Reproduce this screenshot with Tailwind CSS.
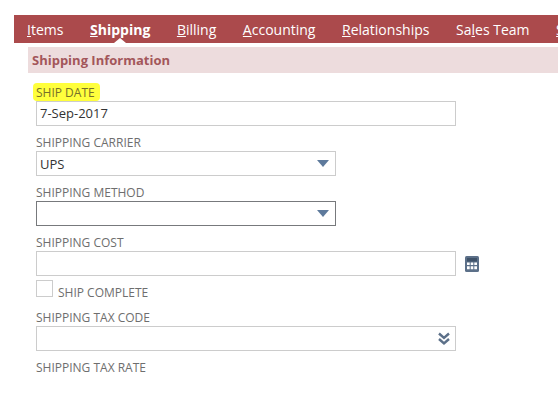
<!DOCTYPE html>
<html lang="en">
  <head>
    <meta charset="UTF-8" />
    <meta name="viewport" content="width=device-width, initial-scale=1.0" />
    <title>Shipping</title>
    <script src="https://cdn.jsdelivr.net/npm/@tailwindcss/browser@4"></script>
  </head>

  <body class="bg-white overflow-hidden h-[407px] font-['Open_Sans',sans-serif]">
    <div class="pt-[15px] pl-[14px]">
      <!-- Tabs -->
      <nav class="h-[28px] bg-[#ab4a4c] text-white text-[14px] leading-[30px] flex gap-[26.6px] pl-[13px] whitespace-nowrap overflow-hidden">
        <a><u>I</u>tems</a>
        <a class="relative font-bold"><u>S</u>hipping
          <span class="absolute left-[24px] bottom-0 w-0 h-0 border-x-[6px] border-x-transparent border-b-[5px] border-b-white"></span>
        </a>
        <a><u>B</u>illing</a>
        <a><u>A</u>ccounting</a>
        <a><u>R</u>elationships</a>
        <a>Sa<u>l</u>es Team</a>
        <a><u>S</u>ystem</a>
      </nav>

      <div class="pl-[14px] pt-[4px]">
        <!-- Section header -->
        <div class="h-[26px] bg-[#eddcdd] text-[#a3565a] text-[13px] font-bold leading-[26px] pl-[4px]">Shipping Information</div>

        <!-- Fields -->
        <div class="pl-[8px] pt-[3px] text-[12px] text-[#6e6e6e]">
          <div class="h-[25px] flex items-end">
            <span class="bg-[#ffff3c] text-[#77702a] -ml-[3px] px-[3px] pr-[5px] pt-[2px] leading-[16px] rounded-sm">SHIP DATE</span>
          </div>
          <div class="w-[420px] h-[25px] border border-[#cccccc] text-[13px] text-[#333333] leading-[23px] pl-[3px]">7-Sep-2017</div>

          <div class="h-[25px] flex items-end leading-[16px]">SHIPPING CARRIER</div>
          <div class="w-[300px] h-[25px] border border-[#cccccc] text-[13px] text-[#333333] leading-[23px] pl-[3px] flex justify-between items-center pr-[6px]">
            <span class="mt-[1px]">UPS</span>
            <svg class="w-[12px] h-[7px]" viewBox="0 0 12 7"><path d="M0 0h12L6 7z" fill="#5e7a9c" /></svg>
          </div>

          <div class="h-[25px] flex items-end leading-[16px]">SHIPPING METHOD</div>
          <div class="w-[300px] h-[25px] border border-[#77797c] flex justify-end items-center pr-[6px]">
            <svg class="w-[12px] h-[7px]" viewBox="0 0 12 7"><path d="M0 0h12L6 7z" fill="#5e7a9c" /></svg>
          </div>

          <div class="h-[25px] flex items-end leading-[16px]">SHIPPING COST</div>
          <div class="flex items-center gap-[9px]">
            <div class="w-[420px] h-[25px] border border-[#cccccc]"></div>
            <svg class="w-[14px] h-[16px]" viewBox="0 0 14 16">
              <rect width="14" height="16" rx="1.5" fill="#5c7089" />
              <rect x="2" y="2" width="10" height="3.500" fill="#3f5269" />
              <path d="M2 6.500h2.700v2.500H2zM5.700 6.500h2.600v2.500H5.700zM9.300 6.500h2.700v2.500H9.300zM2 10.200h2.700v3H2zM5.700 10.200h2.600v3H5.700zM9.300 10.200h2.700v3H9.300z" fill="#fff" />
            </svg>
          </div>

          <div class="h-[25px] flex items-start pt-[4px] gap-[5px]">
            <div class="w-[17px] h-[17px] border border-[#cccccc]"></div>
            <span class="leading-[18px] mt-[4px]">SHIP COMPLETE</span>
          </div>

          <div class="h-[25px] flex items-end leading-[16px]">SHIPPING TAX CODE</div>
          <div class="w-[420px] h-[25px] border border-[#cccccc] flex justify-end items-center pr-[4px]">
            <svg class="w-[14px] h-[14px]" viewBox="0 0 14 14" fill="none" stroke="#5c7089" stroke-width="2.400">
              <path d="M2 1.500l5 4.500 5-4.500M2 7l5 4.500L12 7" />
            </svg>
          </div>

          <div class="h-[25px] flex items-end leading-[16px]">SHIPPING TAX RATE</div>
        </div>
      </div>
    </div>
  </body>
</html>
